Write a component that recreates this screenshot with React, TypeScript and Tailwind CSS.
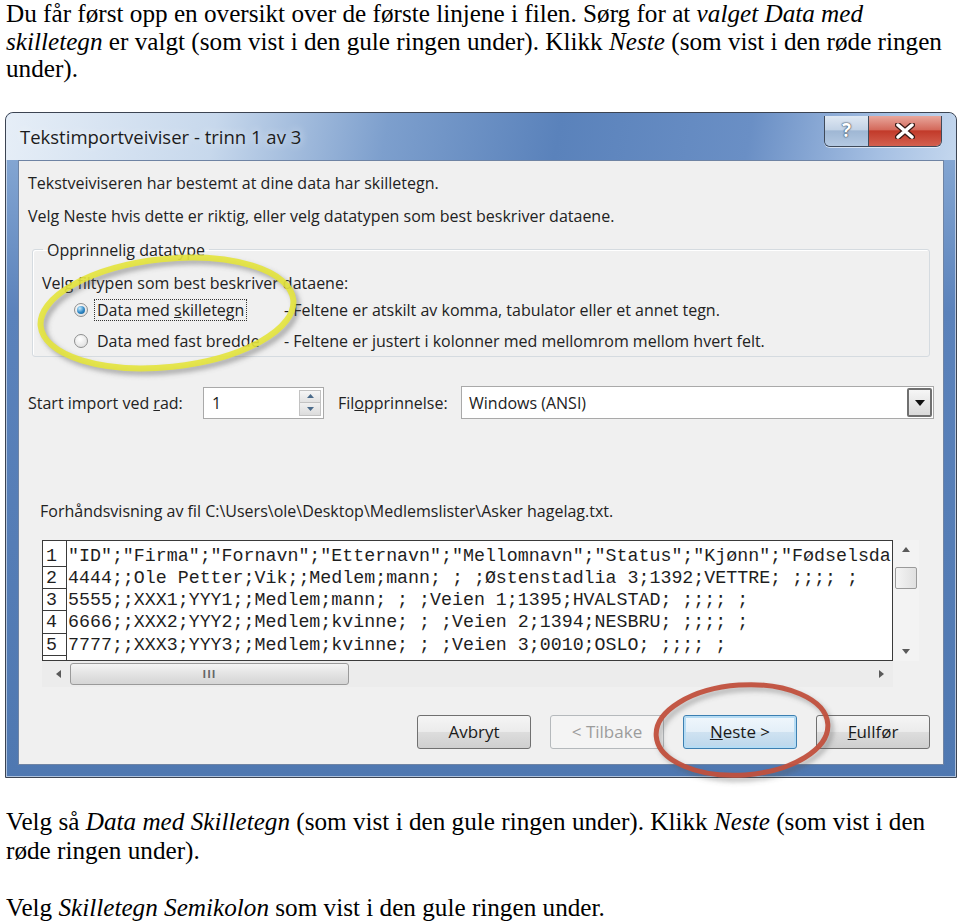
import React from 'react';

const previewRows = [
  '"ID";"Firma";"Fornavn";"Etternavn";"Mellomnavn";"Status";"Kjønn";"Fødselsda',
  '4444;;Ole Petter;Vik;;Medlem;mann; ; ;Østenstadlia 3;1392;VETTRE; ;;;; ;',
  '5555;;XXX1;YYY1;;Medlem;mann; ; ;Veien 1;1395;HVALSTAD; ;;;; ;',
  '6666;;XXX2;YYY2;;Medlem;kvinne; ; ;Veien 2;1394;NESBRU; ;;;; ;',
  '7777;;XXX3;YYY3;;Medlem;kvinne; ; ;Veien 3;0010;OSLO; ;;;; ;',
];

function Radio({ checked }: { checked?: boolean }) {
  return (
    <span className="w-[14px] h-[14px] rounded-full border border-[#8e8f8f] bg-[radial-gradient(circle_at_40%_35%,#ffffff,#d9d9d9)] flex items-center justify-center shrink-0">
      {checked && (
        <span className="w-[8px] h-[8px] rounded-full bg-[radial-gradient(circle_at_35%_30%,#c4ecff,#2f86c4_55%,#145a8d)]" />
      )}
    </span>
  );
}

function DialogButton({ children, primary, disabled }: { children: React.ReactNode; primary?: boolean; disabled?: boolean }) {
  const tone = disabled
    ? 'border-[#b5b9bc] text-[#9c9c9c] bg-[#f4f4f4]'
    : primary
      ? 'border-[#3c7fb1] text-[#1a1a1a] bg-[linear-gradient(#f0f7fc,#e3eff8_50%,#cfe2f1_51%,#bcd7ec)] shadow-[inset_0_0_0_2px_#b6dcf4]'
      : 'border-[#707070] text-[#1a1a1a] bg-[linear-gradient(#f5f5f5,#ebebeb_50%,#dddddd_51%,#cfcfcf)]';
  return (
    <div className={`w-[114px] h-[34px] rounded-[3px] border flex items-center justify-center text-[17px] ${tone}`}>
      {children}
    </div>
  );
}

function Arrow({ dir }: { dir: 'up' | 'down' | 'left' | 'right' }) {
  const pts = {
    up: '1,6 5,1 9,6',
    down: '1,1 5,6 9,1',
    left: '6,1 1,5 6,9',
    right: '1,1 6,5 1,9',
  }[dir];
  const size = dir === 'up' || dir === 'down' ? { w: 10, h: 7 } : { w: 7, h: 10 };
  return (
    <svg width={size.w} height={size.h} viewBox={`0 0 ${size.w} ${size.h}`}>
      <polygon points={pts} fill="#5a5a5a" />
    </svg>
  );
}

export default function App() {
  return (
    <div className="w-[960px] h-[923px] bg-white overflow-hidden text-black font-['Liberation_Serif','Times_New_Roman',serif]">
      <p className="pl-[6px] text-[25.2px] leading-[27.5px] whitespace-nowrap">
        Du får først opp en oversikt over de første linjene i filen. Sørg for at <i>valget Data med</i>
        <br />
        <i>skilletegn</i> er valgt (som vist i den gule ringen under). Klikk <i>Neste</i> (som vist i den røde ringen
        <br />
        under).
      </p>

      {/* dialog screenshot */}
      <div className="relative mt-[29px] ml-[5px] w-[952px] h-[666px] rounded-t-[8px] border border-[#3c4452] bg-[linear-gradient(180deg,#8fb0d9_0%,#5b82bb_30%,#4f78b1_100%)] shadow-[inset_0_0_0_1px_rgba(255,255,255,0.55)] flex flex-col font-['Open_Sans','Liberation_Sans',sans-serif] text-[#222]">
        <div className="h-[47px] flex items-start justify-between rounded-t-[8px] bg-[linear-gradient(100deg,#e6eef7_0%,#c7d8ec_22%,#7d9fcd_40%,#5a82bb_58%,#6a8fc5_78%,#a6c0e3_92%,#c4d7ee_100%)]">
          <div className="pl-[14px] pt-[12px] text-[18.5px] leading-[24px] text-[#1c1c1c] [text-shadow:0_0_8px_rgba(255,255,255,0.9)]">
            Tekstimportveiviser - trinn 1 av 3
          </div>
          <div className="mr-[14px] mt-[3px] flex border border-[#3f4a5a] border-t-0 rounded-b-[6px] overflow-hidden shadow-[0_1px_0_rgba(255,255,255,0.6)]">
            <div className="w-[44px] h-[30px] flex items-center justify-center border-r border-[#3f4a5a] bg-[linear-gradient(#dfe8f3,#c3d3e6_45%,#9fb7d4_50%,#b4c9e2)]">
              <span className="text-[19px] font-bold text-white leading-none [text-shadow:0_0_2px_#243447,0_0_1px_#243447]">?</span>
            </div>
            <div className="w-[72px] h-[30px] flex items-center justify-center bg-[linear-gradient(#e8a79c,#d46a5c_45%,#c23a2a_50%,#d3604f)]">
              <svg width="20" height="16" viewBox="0 0 20 16">
                <path d="M3 2 L17 14 M17 2 L3 14" stroke="#3b1a15" strokeWidth="6" strokeLinecap="round" />
                <path d="M3 2 L17 14 M17 2 L3 14" stroke="#ffffff" strokeWidth="3.5" strokeLinecap="round" />
              </svg>
            </div>
          </div>
        </div>

        <div className="mx-[12px] h-[605px] border border-[#6f84a4] bg-[#f0f0f0] flex flex-col text-[16px] leading-[20px]">
          <div className="mt-[12px] pl-[9px]">Tekstveiviseren har bestemt at dine data har skilletegn.</div>
          <div className="mt-[13px] pl-[9px]">Velg Neste hvis dette er riktig, eller velg datatypen som best beskriver dataene.</div>

          <fieldset className="mt-[14px] ml-[13px] w-[898px] h-[117px] border border-[#d5dbe0] rounded-[3px] shadow-[inset_1px_1px_0_#ffffff] px-[9px]">
            <legend className="ml-[1px] px-[4px]">Opprinnelig datatype</legend>
            <div className="mt-[13px]">Velg filtypen som best beskriver dataene:</div>
            <div className="mt-[6px] flex items-center h-[23px]">
              <div className="ml-[32px]"><Radio checked /></div>
              <div className="ml-[6px] w-[190px]">
                <span className="inline-block px-[2px] border border-dotted border-[#333]">
                  Data med <span className="underline">s</span>killetegn
                </span>
              </div>
              <div>- Feltene er atskilt av komma, tabulator eller et annet tegn.</div>
            </div>
            <div className="mt-[8px] flex items-center h-[23px]">
              <div className="ml-[32px]"><Radio /></div>
              <div className="ml-[9px] w-[187px]">Data med fast bredde</div>
              <div>- Feltene er justert i kolonner med mellomrom mellom hvert felt.</div>
            </div>
          </fieldset>

          <div className="mt-[30px] flex items-center h-[32px] pl-[9px]">
            <div className="w-[175px]">Start import ved <span className="underline">r</span>ad:</div>
            <div className="w-[121px] h-[32px] border border-[#a9a9a9] bg-white flex items-center justify-between pl-[8px] pr-[2px]">
              <span>1</span>
              <div className="w-[22px] h-[26px] flex flex-col border border-[#c2c2c2]">
                <div className="flex-1 flex items-center justify-center bg-[linear-gradient(#f6f6f6,#e2e2e2)] border-b border-[#c2c2c2]">
                  <svg width="7" height="4" viewBox="0 0 7 4"><polygon points="0,4 3.5,0 7,4" fill="#4a6a8a" /></svg>
                </div>
                <div className="flex-1 flex items-center justify-center bg-[linear-gradient(#f0f0f0,#dcdcdc)]">
                  <svg width="7" height="4" viewBox="0 0 7 4"><polygon points="0,0 3.5,4 7,0" fill="#4a6a8a" /></svg>
                </div>
              </div>
            </div>
            <div className="ml-[14px] w-[123px]">Fil<span className="underline">o</span>pprinnelse:</div>
            <div className="w-[473px] h-[33px] border border-[#a9a9a9] bg-white flex items-center justify-between pl-[7px] pr-[1px]">
              <span>Windows (ANSI)</span>
              <div className="w-[25px] h-[29px] border-2 border-[#707070] rounded-[2px] bg-[linear-gradient(#f6f6f6,#dadada)] flex items-center justify-center">
                <svg width="10" height="6" viewBox="0 0 10 6"><polygon points="0,0 10,0 5,6" fill="#111" /></svg>
              </div>
            </div>
          </div>

          <div className="mt-[82px] pl-[21px]">Forhåndsvisning av fil C:\Users\ole\Desktop\Medlemslister\Asker hagelag.txt.</div>

          <div className="mt-[19px] ml-[23px] w-[877px] h-[147px] grid grid-cols-[851px_26px] grid-rows-[121px_26px]">
            <div className="border border-[#3a3a3a] bg-white overflow-hidden flex font-['Liberation_Mono','Courier_New',monospace] text-[18.3px] leading-[22.3px] text-[#1e1e1e]">
              <div className="w-[24px] shrink-0 border-r border-[#3a3a3a]">
                {previewRows.map((_, i) => (
                  <div key={i} className={`h-[22.3px] border-b border-[#3a3a3a] pl-[3px] ${i === 0 ? 'mt-[4px]' : ''}`}>{i + 1}</div>
                ))}
                <div className="h-[22.3px]" />
              </div>
              <div className="pl-[1px] pt-[4px] whitespace-pre">
                {previewRows.map((r, i) => (
                  <div key={i} className="h-[22.3px]">{r}</div>
                ))}
              </div>
            </div>
            <div className="bg-[#f3f3f3] flex flex-col items-center py-[6px]">
              <Arrow dir="up" />
              <div className="mt-[14px] w-[22px] h-[22px] rounded-[2px] border border-[#9a9a9a] bg-[linear-gradient(90deg,#f4f4f4,#e0e0e0)]" />
              <div className="flex-1" />
              <Arrow dir="down" />
            </div>
            <div className="bg-[#ececec] flex items-center pl-[13px] pr-[8px]">
              <Arrow dir="left" />
              <div className="ml-[8px] w-[279px] h-[22px] rounded-[3px] border border-[#9a9a9a] bg-[linear-gradient(#f4f4f4,#e3e3e3_50%,#d5d5d5)] flex items-center justify-center">
                <span className="text-[11px] tracking-[1px] text-[#666] font-bold">III</span>
              </div>
              <div className="flex-1" />
              <Arrow dir="right" />
            </div>
            <div className="bg-[#f0f0f0]" />
          </div>

          <div className="mt-[28px] flex justify-end gap-[19px] pr-[13px]">
            <DialogButton>Avbryt</DialogButton>
            <DialogButton disabled>&lt; Tilbake</DialogButton>
            <DialogButton primary><span><span className="underline">N</span>este &gt;</span></DialogButton>
            <DialogButton><span><span className="underline">F</span>ullfør</span></DialogButton>
          </div>
        </div>

        {/* rings drawn on the screenshot */}
        <svg className="absolute inset-0 pointer-events-none overflow-visible" width="952" height="666" viewBox="0 0 952 666">
          <defs>
            <filter id="soft" x="-20%" y="-20%" width="140%" height="140%">
              <feGaussianBlur stdDeviation="2.5" />
            </filter>
          </defs>
          <g transform="rotate(-6 161 200)">
            <ellipse cx="164" cy="204" rx="127" ry="54" fill="none" stroke="#555" strokeOpacity="0.45" strokeWidth="6" filter="url(#soft)" />
            <ellipse cx="161" cy="200" rx="127" ry="54" fill="none" stroke="#e4e43c" strokeOpacity="0.9" strokeWidth="6" />
          </g>
          <g transform="rotate(-4 736 617)">
            <ellipse cx="739" cy="621" rx="86" ry="45" fill="none" stroke="#555" strokeOpacity="0.4" strokeWidth="5" filter="url(#soft)" />
            <ellipse cx="736" cy="617" rx="86" ry="45" fill="none" stroke="#c1503d" strokeOpacity="0.95" strokeWidth="5" />
          </g>
        </svg>
      </div>

      <div className="pl-[6px] text-[25.2px] leading-[29px] whitespace-nowrap">
        <p className="mt-[29px]">
          Velg så <i>Data med Skilletegn</i> (som vist i den gule ringen under). Klikk <i>Neste</i> (som vist i den
          <br />
          røde ringen under).
        </p>
        <p className="mt-[28px]">
          Velg <i>Skilletegn Semikolon</i> som vist i den gule ringen under.
        </p>
      </div>
    </div>
  );
}
